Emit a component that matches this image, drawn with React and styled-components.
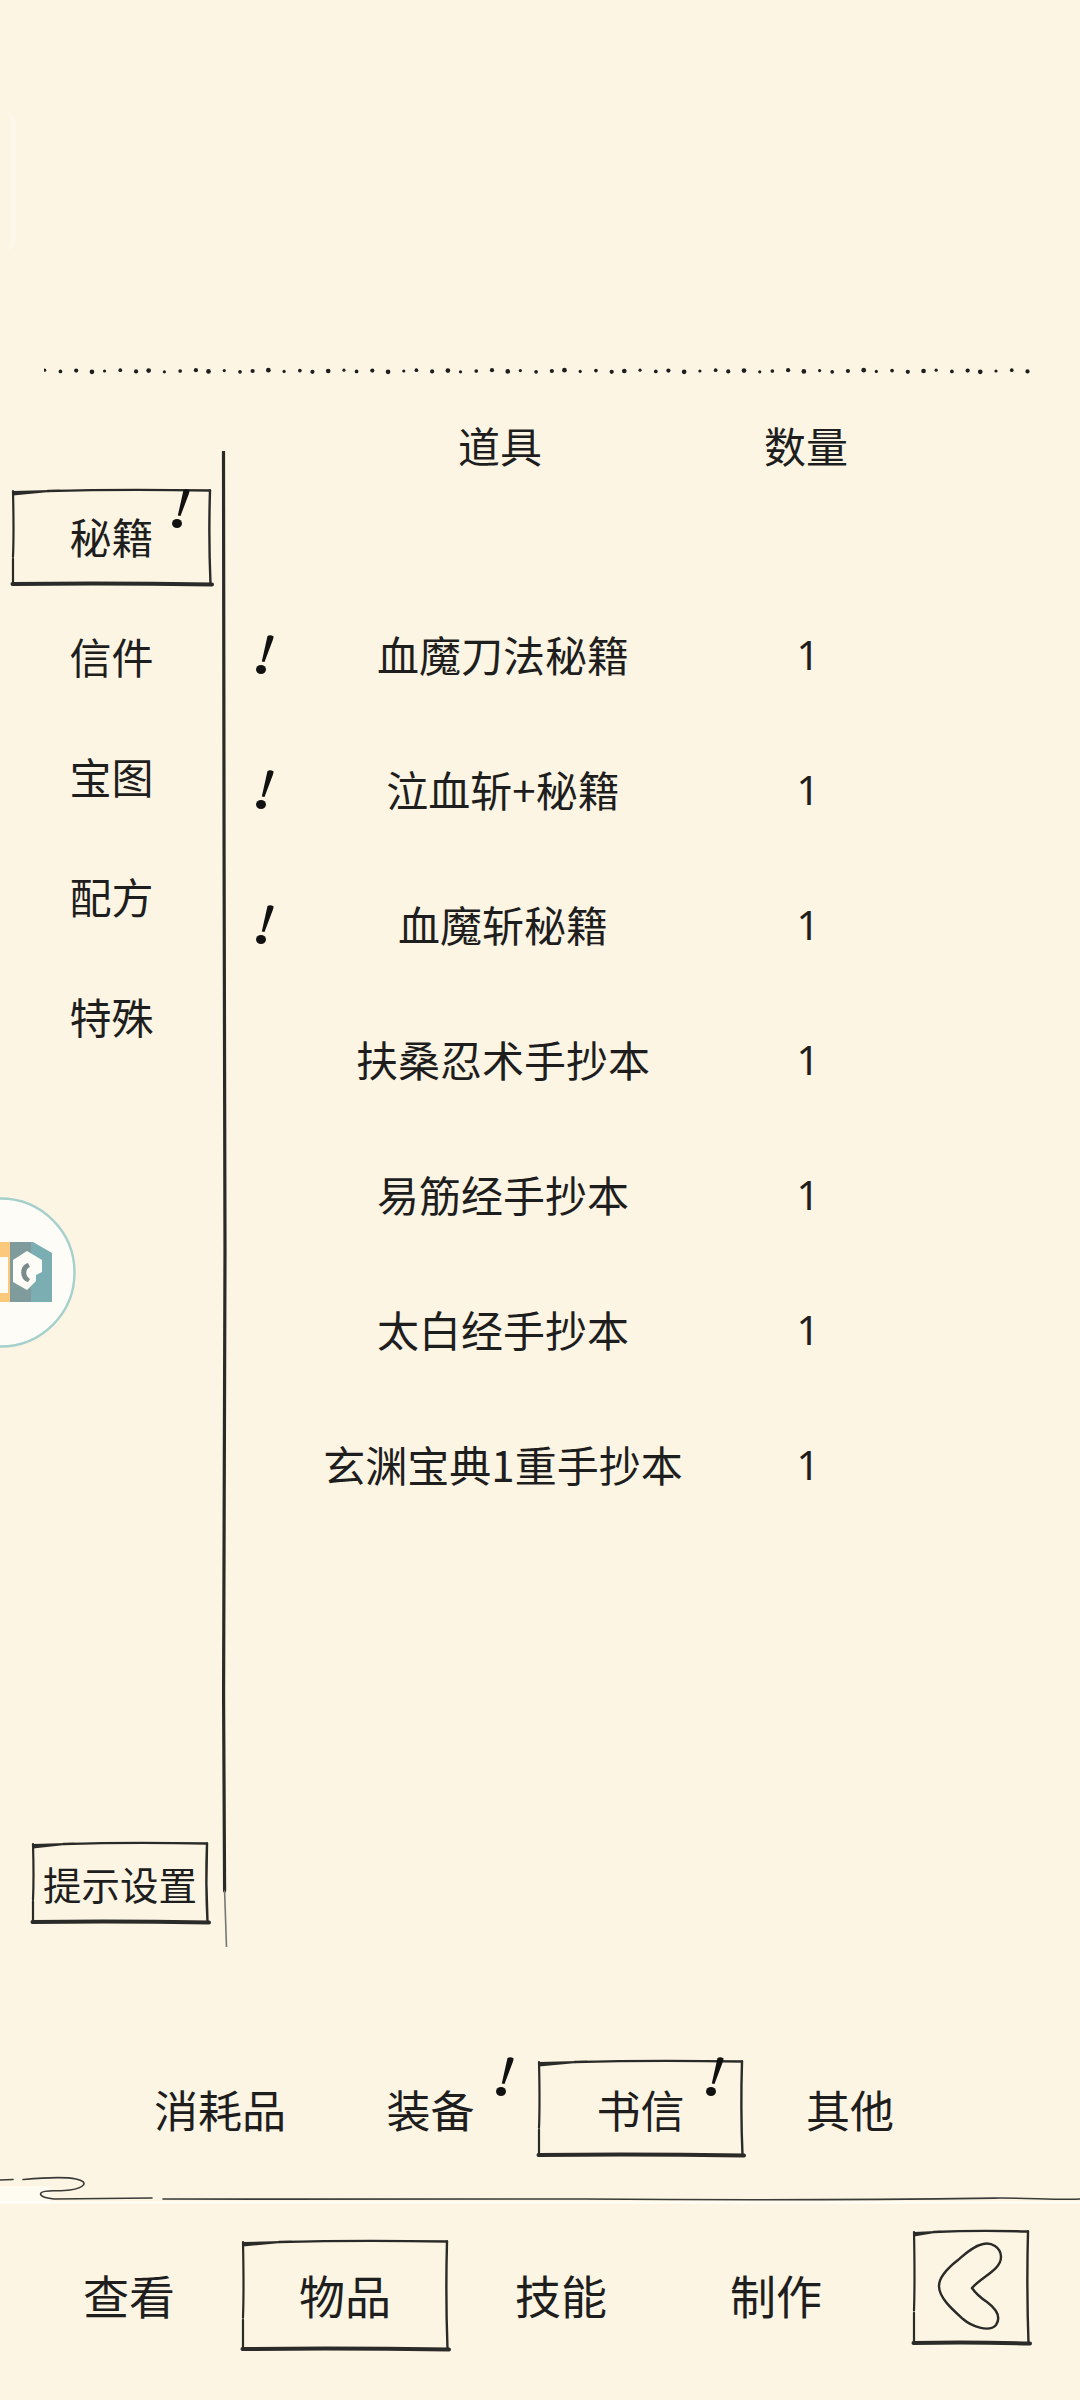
import React from "react";
import styled, { createGlobalStyle } from "styled-components";

const Global = createGlobalStyle`
  html, body { margin: 0; padding: 0; background: #fcf5e3; }
  * { box-sizing: border-box; }
`;

const Page = styled.div`
  position: relative;
  width: 1080px;
  height: 2400px;
  overflow: hidden;
  background: #fcf5e3;
  color: #1e1e1e;
  font-family: "Noto Sans CJK SC", "Noto Sans", sans-serif;
  display: flex;
  flex-direction: column;
`;

const Top = styled.div`
  height: 378px;
  padding: 363px 0 0 44px;
`;

const DotSvg = styled.svg`
  display: block;
  width: 992px;
  height: 15px;
`;

const Ghost = styled.div`
  position: absolute;
  left: -12px;
  top: 112px;
  width: 28px;
  height: 138px;
  border-radius: 10px;
  background: rgba(255, 255, 255, 0.06);
  border-right: 6px solid rgba(255, 255, 255, 0.2);
`;

const Main = styled.div`
  height: 1572px;
  display: flex;
`;

const Sidebar = styled.nav`
  width: 220px;
  padding: 111px 0 26px 12px;
  display: flex;
  flex-direction: column;
`;

const SideTab = styled.div`
  position: relative;
  width: 199px;
  height: 97px;
  margin-bottom: 23px;
  padding-bottom: 3px;
  display: flex;
  align-items: center;
  justify-content: center;
  font-size: 42px;
  line-height: 1;
`;

const SettingsBtn = styled.div`
  position: relative;
  width: 176px;
  height: 82px;
  margin: auto 0 0 20px;
  display: flex;
  align-items: center;
  justify-content: center;
  font-size: 38.5px;
  line-height: 1;
  white-space: nowrap;
`;

const DividerSvg = styled.svg`
  display: block;
  width: 10px;
  height: 1496px;
  margin-top: 73px;
  flex: none;
`;

const List = styled.section`
  flex: 1;
  padding: 37px 0 0 24px;
`;

const rowGrid = `
  display: grid;
  grid-template-columns: 20px 458px 148px;
  align-items: center;
  text-align: center;
  font-size: 42px;
  line-height: 1;
`;

const HeaderRow = styled.div`
  ${rowGrid}
  height: 60px;
  margin-bottom: 111px;
`;

const Row = styled.div`
  ${rowGrid}
  height: 135px;
`;

const Name = styled.span`
  white-space: nowrap;
`;

const HeaderName = styled(Name)`
  padding-right: ${(p) => p.$inset || 0}px;
`;

const Qty = styled.span`
  padding: 3px 0 0 4px;
  font-family: "Noto Sans", sans-serif;
  font-size: 40px;
`;

const BangSvg = styled.svg`
  display: block;
  width: 20px;
  height: 40px;
  ${(p) => p.$nudge && "margin-top: 3px;"}
`;

const BadgeWrap = styled.span`
  position: absolute;
  left: ${(p) => p.$left}px;
  top: ${(p) => p.$top}px;
  line-height: 0;
`;

const SubBar = styled.div`
  margin-top: 110px;
  padding-left: 117px;
  height: 97px;
  display: grid;
  grid-template-columns: 206px 215px 205px 214px;
`;

const SubTab = styled.div`
  position: relative;
  display: flex;
  align-items: center;
  justify-content: center;
  font-size: 44px;
  line-height: 1;
`;

const Label = styled.span`
  position: relative;
  white-space: nowrap;
`;

const WaveSvg = styled.svg`
  display: block;
  width: 1080px;
  height: 36px;
  margin-top: 13px;
  flex: none;
`;

const BottomBar = styled.div`
  margin-top: 24px;
  padding-left: 16px;
  display: grid;
  grid-template-columns: 226px 206px 226px 204px auto;
  align-items: start;
`;

const BottomTab = styled.div`
  position: relative;
  height: 111px;
  margin-top: 10px;
  padding-bottom: 3px;
  display: flex;
  align-items: center;
  justify-content: center;
  font-size: 46px;
  line-height: 1;
`;

const BackBtn = styled.div`
  position: relative;
  width: 116px;
  height: 115px;
  margin-left: 35px;
`;

const FrameSvg = styled.svg`
  position: absolute;
  inset: 0;
  width: 100%;
  height: 100%;
  overflow: visible;
  pointer-events: none;
`;

const LogoSvg = styled.svg`
  position: absolute;
  left: -75px;
  top: 1197px;
  width: 151px;
  height: 151px;
`;

const ink = "#2a2a28";

const Frame = ({ w, h }) => (
  <FrameSvg viewBox={`0 0 ${w} ${h}`} fill="none" stroke={ink} strokeLinecap="round">
    <path d={`M1 2 L${w * 0.24} 0.8 L${w * 0.24} 2 L1 6.5 Z`} fill={ink} stroke="none" />
    <path d={`M${w * 0.18} 2 Q${w * 0.55} 0 ${w - 1} 1.5`} strokeWidth="2.4" />
    <path d={`M${w - 1} 1.5 Q${w - 2.5} ${h * 0.5} ${w - 0.5} ${h - 2}`} strokeWidth="2.4" />
    <path d={`M1 2 Q2 ${h * 0.45} 1 ${h * 0.7} M1 ${h * 0.72} L1 ${h - 2}`} strokeWidth="2.2" />
    <path d={`M0.5 ${h - 2} Q${w * 0.5} ${h - 3} ${w + 1} ${h - 1.5}`} strokeWidth="4" />
  </FrameSvg>
);

const Bang = ({ nudge }) => (
  <BangSvg viewBox="0 0 20 40" $nudge={nudge}>
    <path d="M13.5 1 Q16 -0.5 19.5 1.2 Q19.6 3 18.8 5 L10.5 27 L7.8 26.6 Z" fill="#111" />
    <ellipse cx="7" cy="34.5" rx="5" ry="4.6" fill="#111" />
  </BangSvg>
);

const dots = Array.from({ length: 67 }, (_, i) => {
  const x = 2 + i * 14.85 + ((i * 37) % 7) * 0.45 - 1.3;
  const y = 8 + (((i * 53) % 5) - 2) * 0.4;
  const r = 1.6 + ((i * 29) % 4) * 0.25;
  return { x, y, r };
});

const sideTabs = ["信件", "宝图", "配方", "特殊"];
const rows = [
  ["血魔刀法秘籍", true],
  ["泣血斩+秘籍", true],
  ["血魔斩秘籍", true],
  ["扶桑忍术手抄本", false],
  ["易筋经手抄本", false],
  ["太白经手抄本", false],
  ["玄渊宝典1重手抄本", false],
];

export default function App() {
  return (
    <Page>
      <Global />
      <Ghost />
      <Top>
        <DotSvg viewBox="0 0 992 15">
          {dots.map((d, i) => (
            <circle key={i} cx={d.x} cy={d.y} r={d.r} fill="#1e1e1e" />
          ))}
        </DotSvg>
      </Top>
      <Main>
        <Sidebar>
          <SideTab>
            <Frame w={199} h={97} />
            秘籍
            <BadgeWrap $left={158} $top={0}>
              <Bang />
            </BadgeWrap>
          </SideTab>
          {sideTabs.map((t) => (
            <SideTab key={t}>{t}</SideTab>
          ))}
          <SettingsBtn>
            <Frame w={176} h={82} />
            提示设置
          </SettingsBtn>
        </Sidebar>
        <DividerSvg viewBox="0 0 10 1496" fill="none" strokeLinecap="round">
          <path
            d="M3.5 0 C3 300 5 500 5 800 C5 950 3.5 1100 3.6 1250 C3.6 1350 4 1400 4.6 1440"
            stroke={ink}
            strokeWidth="3.2"
          />
          <path d="M4.6 1440 L6.5 1496" stroke="#777" strokeWidth="1.6" />
        </DividerSvg>
        <List>
          <HeaderRow>
            <span />
            <HeaderName $inset={6}>道具</HeaderName>
            <HeaderName>数量</HeaderName>
          </HeaderRow>
          {rows.map(([name, flag]) => (
            <Row key={name}>
              {flag ? <Bang nudge /> : <span />}
              <Name>{name}</Name>
              <Qty>1</Qty>
            </Row>
          ))}
        </List>
      </Main>
      <SubBar>
        <SubTab>消耗品</SubTab>
        <SubTab>
          <Label>装备</Label>
          <BadgeWrap $left={171} $top={-3}>
            <Bang />
          </BadgeWrap>
        </SubTab>
        <SubTab>
          <Frame w={205} h={97} />
          <Label>书信</Label>
          <BadgeWrap $left={166} $top={-3}>
            <Bang />
          </BadgeWrap>
        </SubTab>
        <SubTab>其他</SubTab>
      </SubBar>
      <WaveSvg viewBox="0 0 1080 36" fill="none" strokeLinecap="round">
        <rect x="0" y="16" width="50" height="17" fill="#fffdf6" opacity="0.7" />
        <rect x="0" y="31" width="1080" height="3" fill="#fffdf6" opacity="0.7" />
        <g stroke="#3a3a38" strokeWidth="1.6">
          <path d="M0 10 L13 9.5 M23 9.5 C40 8 62 6 76 9 C90 12 84 18 70 20 C58 22 44 19 41 23 C39 26 45 28 54 29 L152 28" />
          <path d="M163 29 C300 29 420 30 584 29 C800 31 930 29 1000 28 C1030 28 1060 30 1080 29" />
        </g>
      </WaveSvg>
      <BottomBar>
        <BottomTab>查看</BottomTab>
        <BottomTab>
          <Frame w={206} h={111} />
          物品
        </BottomTab>
        <BottomTab>技能</BottomTab>
        <BottomTab>制作</BottomTab>
        <BackBtn>
          <Frame w={116} h={115} />
          <FrameSvg viewBox="0 0 116 115" fill="none">
            <path
              d="M59 58 C68 47 88 40 88 27 C88 17 78 12 70 14 C60 16 52 24 45 30 C36 37 26 46 26 56 C26 68 40 80 50 89 C58 96 76 103 83 95 C89 86 82 78 74 72 C68 68 63 64 59 58 Z"
              stroke={ink}
              strokeWidth="2.4"
            />
          </FrameSvg>
        </BackBtn>
      </BottomBar>
      <LogoSvg viewBox="0 0 151 151">
        <circle cx="75.5" cy="75.5" r="74" fill="#fefcf7" stroke="#a6d0cc" strokeWidth="2.4" />
        <path d="M66 45 H85 V105 H66 Z" fill="#fcc97c" />
        <path d="M66 60 H83 V96 H66 Z" fill="#fefcf7" />
        <path d="M85 45 H106 V105 H85 Z" fill="#7f9b9c" />
        <path d="M106 45 H108 L127 56 V105 H106 Z" fill="#7aaeb2" />
        <path d="M88 63 L102 54 L117 63 V75 L111 78 V84 L102 93 L88 85 Z" fill="#fefcf7" />
        <path d="M103 66 C94 68 94 83 103 85 L105 82 C100 79 100 72 105 70 Z" fill="#7b8b8c" />
      </LogoSvg>
    </Page>
  );
}
